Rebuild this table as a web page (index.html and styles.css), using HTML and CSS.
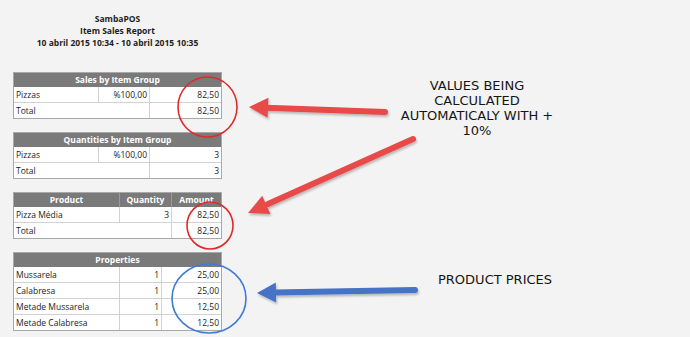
FILE: index.html
```html
<!DOCTYPE html>
<html lang="pt">
<head>
<meta charset="utf-8">
<title>SambaPOS Item Sales Report</title>
<link rel="stylesheet" href="styles.css">
</head>
<body>
<main class="report">
  <header class="report-title">
    <div>SambaPOS</div>
    <div>Item Sales Report</div>
    <div>10 abril 2015 10:34 - 10 abril 2015 10:35</div>
  </header>

  <div class="card">
    <table class="grid">
      <colgroup><col class="c1a"><col class="c1b"><col></colgroup>
      <thead><tr><th colspan="3">Sales by Item Group</th></tr></thead>
      <tbody>
        <tr><td>Pizzas</td><td class="num">%100,00</td><td class="num">82,50</td></tr>
        <tr><td colspan="2">Total</td><td class="num">82,50</td></tr>
      </tbody>
    </table>
  </div>

  <div class="card">
    <table class="grid">
      <colgroup><col class="c1a"><col class="c1b"><col></colgroup>
      <thead><tr><th colspan="3">Quantities by Item Group</th></tr></thead>
      <tbody>
        <tr><td>Pizzas</td><td class="num">%100,00</td><td class="num">3</td></tr>
        <tr><td colspan="2">Total</td><td class="num">3</td></tr>
      </tbody>
    </table>
  </div>

  <div class="card">
    <table class="grid">
      <colgroup><col class="c3a"><col class="c3b"><col></colgroup>
      <thead><tr><th>Product</th><th>Quantity</th><th>Amount</th></tr></thead>
      <tbody>
        <tr><td>Pizza Média</td><td class="num">3</td><td class="num">82,50</td></tr>
        <tr><td colspan="2">Total</td><td class="num">82,50</td></tr>
      </tbody>
    </table>
  </div>

  <div class="card">
    <table class="grid">
      <colgroup><col class="c3a"><col class="c4b"><col></colgroup>
      <thead><tr><th colspan="3">Properties</th></tr></thead>
      <tbody>
        <tr><td>Mussarela</td><td class="num">1</td><td class="num">25,00</td></tr>
        <tr><td>Calabresa</td><td class="num">1</td><td class="num">25,00</td></tr>
        <tr><td>Metade Mussarela</td><td class="num">1</td><td class="num">12,50</td></tr>
        <tr><td>Metade Calabresa</td><td class="num">1</td><td class="num">12,50</td></tr>
      </tbody>
    </table>
  </div>
</main>

<p class="note note-values">VALUES BEING<br>CALCULATED<br>AUTOMATICALY WITH +<br>10%</p>
<p class="note note-prices">PRODUCT PRICES</p>

<svg class="marks" width="690" height="337" viewBox="0 0 690 337" aria-hidden="true">
  <defs>
    <filter id="sh" x="-20%" y="-50%" width="140%" height="200%">
      <feDropShadow dx="1" dy="2" stdDeviation="1.2" flood-color="#000" flood-opacity="0.25"/>
    </filter>
  </defs>
  <ellipse cx="207.5" cy="107" rx="29.5" ry="30" fill="none" stroke="#e02a2a" stroke-width="1.6"/>
  <ellipse cx="210" cy="225.5" rx="23" ry="23.5" fill="none" stroke="#e02a2a" stroke-width="1.6"/>
  <ellipse cx="209" cy="298.5" rx="37" ry="34.5" fill="none" stroke="#3f7bd6" stroke-width="1.6"/>

  <g filter="url(#sh)" fill="#e84848" stroke="#e84848">
    <line x1="385" y1="112" x2="266" y2="107.7" stroke-width="6" stroke-linecap="round"/>
    <polygon points="249,107 268.4,97.7 267.6,117.7" stroke="none"/>
    <line x1="413" y1="139" x2="268" y2="204" stroke-width="6" stroke-linecap="round"/>
    <polygon points="248,213 270.4,213.9 262.2,195.7" stroke="none"/>
  </g>
  <g filter="url(#sh)" fill="#4673c6" stroke="#4673c6">
    <line x1="415" y1="290" x2="274" y2="292.6" stroke-width="6" stroke-linecap="round"/>
    <polygon points="257,293 276.2,302.6 275.8,282.6" stroke="none"/>
  </g>
</svg>
</body>
</html>
```

FILE: styles.css
```css
html, body {
  margin: 0;
  padding: 0;
}
body {
  position: relative;
  width: 690px;
  height: 337px;
  overflow: hidden;
  background: #f3f3f3;
  font-family: "Open Sans", "Noto Sans", sans-serif;
  color: #222;
}
.report {
  width: 209px;
  margin-left: 13px;
  padding-top: 13px;
  display: flex;
  flex-direction: column;
}
.report-title {
  text-align: center;
  font-weight: 700;
  font-size: 8.5px;
  line-height: 12px;
  color: #1e1e1e;
  margin-bottom: 23px;
}
.card {
  border: 1px solid #a8a8a8;
  background: #fff;
  margin-bottom: 13px;
}
.grid {
  width: 100%;
  table-layout: fixed;
  border-collapse: separate;
  border-spacing: 0;
  font-size: 8.5px;
}
.c1a { width: 84px; }
.c1b { width: 51px; }
.c3a { width: 105px; }
.c3b { width: 52px; }
.c4b { width: 42px; }
.grid th {
  background: #7a7a7a;
  color: #fff;
  font-weight: 700;
  line-height: 14px;
  padding: 0;
  text-align: center;
  border-left: 1px solid #9a9a9a;
}
.grid th:first-child { border-left: 0; }
.grid td {
  line-height: 15px;
  padding: 0 2px;
  border-bottom: 1px solid #d2d2d2;
  border-left: 1px solid #d2d2d2;
  white-space: nowrap;
  overflow: hidden;
}
.grid td:first-child { border-left: 0; }
.grid tbody tr:last-child td { border-bottom: 0; }
.grid .num { text-align: right; }

.note {
  position: absolute;
  margin: 0;
  font-family: "DejaVu Sans", Verdana, sans-serif;
  font-size: 13px;
  line-height: 15px;
  color: #151515;
}
.note-values {
  left: 387px;
  top: 78px;
  width: 180px;
  text-align: center;
}
.note-prices {
  left: 438px;
  top: 272px;
}
.marks {
  position: absolute;
  left: 0;
  top: 0;
  pointer-events: none;
}
```
